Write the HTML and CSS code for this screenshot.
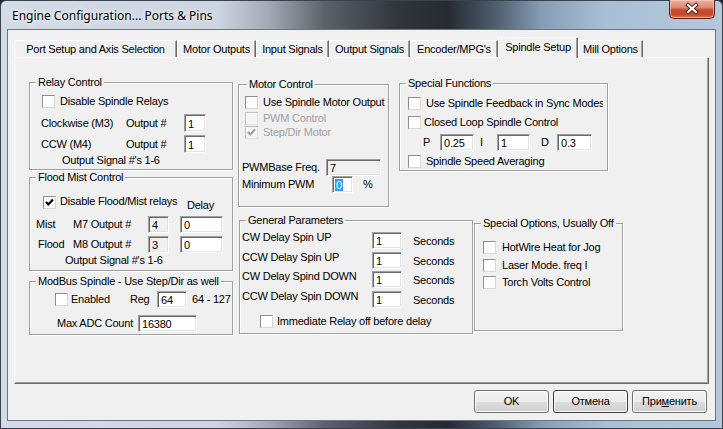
FILE: index.html
```html
<!DOCTYPE html>
<html>
<head>
<meta charset="utf-8">
<title>Engine Configuration</title>
<link rel="stylesheet" href="styles.css">
</head>
<body>
<div class="window">
  <div class="titlebar">
    <span class="title">Engine Configuration... Ports &amp; Pins</span>
    <div class="close">
      <svg width="44" height="18" viewBox="0 0 44 18">
        <path d="M18 5 L26 12 M26 5 L18 12" stroke="#4a2018" stroke-width="4" stroke-linecap="square" fill="none"/>
        <path d="M18 5 L26 12 M26 5 L18 12" stroke="#fff" stroke-width="2.2" stroke-linecap="square" fill="none"/>
      </svg>
    </div>
  </div>
  <div class="client">
    <div class="tabrow">
      <div class="tab w1">Port Setup and Axis Selection</div>
      <div class="tab w2">Motor Outputs</div>
      <div class="tab w3">Input Signals</div>
      <div class="tab w4">Output Signals</div>
      <div class="tab w5">Encoder/MPG's</div>
      <div class="tab sel">Spindle Setup</div>
      <div class="tab w7">Mill Options</div>
    </div>
    <div class="panel">
      <div class="colL">
        <div class="group g-relay">
          <span class="legend">Relay Control</span>
          <div class="row rl1"><span class="cb"></span><span class="lbl gap5">Disable Spindle Relays</span></div>
          <div class="row rl2"><span class="lbl w85">Clockwise (M3)</span><span class="lbl w58">Output #</span><span class="edit e22">1</span></div>
          <div class="row rl3"><span class="lbl w85">CCW (M4)</span><span class="lbl w58">Output #</span><span class="edit e22">1</span></div>
          <div class="row rl4"><span class="lbl">Output Signal #'s 1-6</span></div>
        </div>
        <div class="group g-flood">
          <span class="legend">Flood Mist Control</span>
          <div class="row fl1"><span class="cb chk"><svg width="11" height="11" viewBox="0 0 11 11"><path d="M2 5 L4.3 7.5 L9 2.5" stroke="#000" stroke-width="2.2" fill="none"/></svg></span><span class="lbl fl1lbl">Disable Flood/Mist relays</span><span class="lbl delay">Delay</span></div>
          <div class="row fl2"><span class="lbl w37">Mist</span><span class="lbl w75">M7 Output #</span><span class="edit e21 dis">4</span><span class="edit e43">0</span></div>
          <div class="row fl3"><span class="lbl w35">Flood</span><span class="lbl w75">M8 Output #</span><span class="edit e21 dis">3</span><span class="edit e43">0</span></div>
          <div class="row fl4"><span class="lbl">Output Signal #'s 1-6</span></div>
        </div>
        <div class="group g-modbus">
          <span class="legend">ModBus Spindle - Use Step/Dir as well</span>
          <div class="row mb1"><span class="cb"></span><span class="lbl mbEn">Enabled</span><span class="lbl w27">Reg</span><span class="edit e30">64</span><span class="lbl range">64 - 127</span></div>
          <div class="row mb2"><span class="lbl w81">Max ADC Count</span><span class="edit e59">16380</span></div>
        </div>
      </div>
      <div class="colR">
        <div class="rowTop">
          <div class="group g-motor">
            <span class="legend">Motor Control</span>
            <div class="row mc1"><span class="cb"></span><span class="lbl gap5">Use Spindle Motor Output</span></div>
            <div class="row mc2"><span class="cb disb"></span><span class="lbl gap5 gray">PWM Control</span></div>
            <div class="row mc3"><span class="cb disb"><svg width="11" height="11" viewBox="0 0 11 11"><path d="M2 5 L4.3 7.5 L9 2.5" stroke="#a0a0a0" stroke-width="2.2" fill="none"/></svg></span><span class="lbl gap5 gray">Step/Dir Motor</span></div>
            <div class="row mc4"><span class="lbl w84">PWMBase Freq.</span><span class="edit e55 dis">7</span></div>
            <div class="row mc5"><span class="lbl w90">Minimum PWM</span><span class="edit e21"><span class="hl">0</span></span><span class="lbl pct">%</span></div>
          </div>
          <div class="group g-special">
            <span class="legend">Special Functions</span>
            <div class="row sf1"><span class="cb"></span><span class="lbl gap5 clip">Use Spindle Feedback in Sync Modes</span></div>
            <div class="row sf2"><span class="cb"></span><span class="lbl gap3">Closed Loop Spindle Control</span></div>
            <div class="row sf3"><span class="lbl w17">P</span><span class="edit e34">0.25</span><span class="lbl w17 ml6">I</span><span class="edit e33">1</span><span class="lbl w16 ml11">D</span><span class="edit e35">0.3</span></div>
            <div class="row sf4"><span class="cb"></span><span class="lbl gap5">Spindle Speed Averaging</span></div>
          </div>
        </div>
        <div class="rowBot">
          <div class="group g-general">
            <span class="legend">General Parameters</span>
            <div class="row gp gp1"><span class="lbl w130 up">CW Delay Spin UP</span><span class="edit e30">1</span><span class="lbl sec">Seconds</span></div>
            <div class="row gp gp2"><span class="lbl w130 up">CCW Delay Spin UP</span><span class="edit e30">1</span><span class="lbl sec">Seconds</span></div>
            <div class="row gp gp3"><span class="lbl w130 up">CW Delay Spind DOWN</span><span class="edit e30">1</span><span class="lbl sec">Seconds</span></div>
            <div class="row gp gp4"><span class="lbl w130 up">CCW Delay Spin DOWN</span><span class="edit e30">1</span><span class="lbl sec">Seconds</span></div>
            <div class="row gp5"><span class="cb"></span><span class="lbl gap4">Immediate Relay off before delay</span></div>
          </div>
          <div class="group g-options">
            <span class="legend">Special Options, Usually Off</span>
            <div class="row so1"><span class="cb"></span><span class="lbl gap6">HotWire Heat for Jog</span></div>
            <div class="row so2"><span class="cb"></span><span class="lbl gap6">Laser Mode. freq I</span></div>
            <div class="row so3"><span class="cb"></span><span class="lbl gap6">Torch Volts Control</span></div>
          </div>
        </div>
      </div>
    </div>
    <div class="buttons">
      <div class="btn">OK</div>
      <div class="btn focus">Отмена</div>
      <div class="btn">При<u>м</u>енить</div>
    </div>
  </div>
</div>
</body>
</html>
```

FILE: styles.css
```css
* { box-sizing: border-box; }
html, body { margin: 0; padding: 0; }
body {
  width: 723px; height: 429px; overflow: hidden;
  background: #1d2430;
  font-family: "Liberation Sans", Arial, sans-serif;
  font-size: 11px; line-height: 13px; color: #000;
  letter-spacing: -0.22px;
}
.window {
  width: 723px; height: 429px;
  border: 1px solid #39434f;
  border-radius: 6px 6px 0 0;
  background: linear-gradient(90deg, #d3dce6 0%, #cdd6e0 30%, #a2abb5 37%, #5a6169 45%, #30363c 55%, #262b31 62%, #4a5868 68%, #869db5 75%, #a9bfd5 84%, #b3c8dc 100%);
  padding: 0 6px 0 6px;
}
.titlebar {
  height: 28px;
  display: flex; align-items: flex-start;
}
.title {
  font-family: "Noto Sans", "Open Sans", sans-serif;
  font-size: 12px; line-height: 16px; letter-spacing: 0;
  margin: 7px 0 0 5px;
  color: #000;
  text-shadow: 0 0 6px rgba(255,255,255,0.9), 0 0 3px rgba(255,255,255,0.9);
}
.close {
  margin-left: auto; margin-right: 1px;
  width: 46px; height: 19px;
  margin-top: -1px;
  border: 1px solid #5e2116;
  border-top: none;
  border-radius: 0 0 5px 5px;
  background: linear-gradient(180deg, #eab2a3 0%, #dd8a74 40%, #c84a2e 55%, #c8492c 80%, #d97a55 100%);
  box-shadow: inset 0 0 0 1px rgba(255,220,210,0.5);
  display: flex; align-items: center; justify-content: center;
}
.client {
  width: 709px; height: 392px;
  border: 1px solid #6b7683;
  background: #f0f0f0;
  padding: 7px 0 0 6px;
}
.tabrow { display: flex; height: 20px; align-items: flex-end; position: relative; z-index: 2; }
.tab {
  height: 17px;
  border-top: 1px solid #fff; border-left: 1px solid #fff;
  border-right: 1px solid #696969;
  box-shadow: inset -1px 0 0 #a0a0a0;
  text-align: center; padding-top: 2px;
  white-space: nowrap;
}
.w1 { width: 163px; }
.w2 { width: 79px; }
.w3 { width: 73px; }
.w4 { width: 81px; }
.w5 { width: 88px; }
.w7 { width: 65px; }
.tab.sel { width: 80px; height: 21px; margin-bottom: -1px; background: #f0f0f0; padding-top: 3px; }
.panel {
  width: 695px; height: 327px;
  border: 1px solid; border-color: #fff #696969 #696969 #fff;
  box-shadow: inset -1px -1px 0 #a0a0a0;
  display: flex; align-items: flex-start;
  padding: 24px 0 0 14px;
}
.colL { width: 204px; display: flex; flex-direction: column; }
.colR { margin-left: 5px; display: flex; flex-direction: column; }
.rowTop { display: flex; align-items: flex-start; }
.rowBot { display: flex; align-items: flex-start; margin-top: 13px; }
.group {
  position: relative;
  border: 1px solid #a0a0a0;
  box-shadow: inset 1px 1px 0 #fff, 1px 1px 0 #fff;
}
.legend {
  position: absolute; top: -7px; left: 6px;
  padding: 0 2px; background: #f0f0f0; white-space: nowrap;
}
.g-relay { height: 88px; }
.g-flood { height: 94px; margin-top: 7px; }
.g-modbus { height: 54px; margin-top: 10px; }
.g-motor { width: 151px; height: 123px; margin-top: 2px; }
.g-motor .legend { left: 8px; }
.g-special { width: 209px; height: 88px; margin-top: 1px; margin-left: 10px; }
.g-general { width: 234px; height: 114px; margin-left: 1px; }
.g-options { width: 149px; height: 108px; margin-top: 3px; margin-left: 1px; }

.row { display: flex; align-items: center; }
.lbl { white-space: nowrap; }
.clip { width: 177px; overflow: hidden; }
.gray { color: #a0a0a0; }
.gap3 { margin-left: 3px; }
.gap4 { margin-left: 4px; }
.gap5 { margin-left: 5px; }
.gap6 { margin-left: 6px; }
.ml6 { margin-left: 6px; }
.ml11 { margin-left: 11px; }
.w16 { width: 16px; } .w17 { width: 17px; } .w27 { width: 27px; } .w35 { width: 35px; } .w37 { width: 37px; }
.w58 { width: 58px; } .w75 { width: 75px; } .w81 { width: 81px; } .w84 { width: 84px; } .w85 { width: 85px; }
.w90 { width: 90px; } .w130 { width: 130px; }

.cb {
  width: 13px; height: 13px; flex: none;
  background: #fff;
  border: 1px solid; border-color: #8e8f8f #d8d8d8 #d8d8d8 #8e8f8f;
  display: flex; align-items: center; justify-content: center;
}
.cb.disb { background: #f4f4f4; border-color: #c0c0c0 #e2e2e2 #e2e2e2 #c0c0c0; }
.edit {
  flex: none; height: 17px;
  background: #fff;
  border: 1px solid; border-color: #a0a0a0 #fff #fff #a0a0a0;
  box-shadow: inset 1px 1px 0 #696969, inset -1px -1px 0 #e3e3e3;
  padding: 2px 0 0 3px;
  line-height: 13px; white-space: nowrap;
}
.edit.dis { background: #f0f0f0; }
.e21 { width: 21px; } .e22 { width: 22px; height: 18px; padding-top: 3px; } .e30 { width: 30px; } .e33 { width: 33px; }
.e34 { width: 34px; } .e35 { width: 35px; } .e43 { width: 43px; } .e55 { width: 55px; } .e59 { width: 59px; }
.hl { background: #3399ff; color: #fff; padding: 0 1px; }

/* relay */
.rl1 { margin-top: 11px; margin-left: 12px; height: 14px; }
.rl2 { margin-top: 6px; margin-left: 11px; height: 18px; }
.rl3 { margin-top: 3px; margin-left: 11px; height: 18px; }
.rl4 { margin-top: 1px; margin-left: 32px; height: 13px; }
/* flood */
.fl1 { margin-top: 17px; margin-left: 13px; height: 17px; align-items: flex-start; }
.fl1 .cb { margin-top: 1px; }
.fl1lbl { margin-left: 4px; width: 127px; }
.delay { margin-top: 4px; }
.fl2 { margin-top: 4px; margin-left: 6px; height: 17px; }
.fl3 { margin-top: 3px; margin-left: 8px; height: 17px; }
.fl2 .e43, .fl3 .e43 { margin-left: 11px; }
.fl4 { margin-top: 1px; margin-left: 35px; height: 13px; }
/* modbus */
.mb1 { margin-top: 9px; margin-left: 25px; height: 17px; }
.mbEn { margin-left: 3px; width: 59px; }
.range { margin-left: 5px; }
.mb2 { margin-top: 7px; margin-left: 27px; height: 17px; }
/* motor */
.mc1 { margin-top: 10px; margin-left: 6px; height: 14px; }
.mc2 { margin-top: 2px; margin-left: 6px; height: 14px; }
.mc3 { margin-top: 0; margin-left: 6px; height: 14px; }
.mc4 { margin-top: 20px; margin-left: 3px; height: 17px; }
.mc5 { margin-top: 0; margin-left: 3px; height: 17px; }
.mc5 .edit { padding-left: 2px; }
.pct { margin-left: 10px; }
/* special */
.sf1 { margin-top: 12px; margin-left: 8px; height: 14px; }
.sf2 { margin-top: 5px; margin-left: 8px; height: 14px; }
.sf3 { margin-top: 5px; margin-left: 23px; height: 17px; }
.sf4 { margin-top: 3px; margin-left: 8px; height: 14px; }
/* general */
.gp { margin-left: 2px; height: 17px; align-items: flex-start; }
.gp .up { margin-top: -1px; }
.gp .sec { margin-left: 11px; margin-top: 3px; }
.gp1 { margin-top: 11px; }
.gp2 { margin-top: 3px; }
.gp3 { margin-top: 2px; }
.gp4 { margin-top: 3px; }
.gp5 { margin-top: 6px; margin-left: 20px; height: 14px; }
/* options */
.so1 { margin-top: 16px; margin-left: 8px; height: 14px; }
.so2 { margin-top: 4px; margin-left: 8px; height: 14px; }
.so3 { margin-top: 3px; margin-left: 8px; height: 14px; }

.buttons {
  display: flex; justify-content: flex-end; gap: 4px;
  margin-top: 6px; padding-right: 8px;
}
.btn {
  width: 75px; height: 23px;
  border: 1px solid #707070; border-radius: 3px;
  background: linear-gradient(180deg, #f2f2f2 0%, #ebebeb 50%, #dddddd 51%, #cfcfcf 100%);
  box-shadow: inset 0 0 0 1px #fcfcfc;
  text-align: center; line-height: 21px;
}
.btn.focus { border-color: #3d3d3d; }
```
